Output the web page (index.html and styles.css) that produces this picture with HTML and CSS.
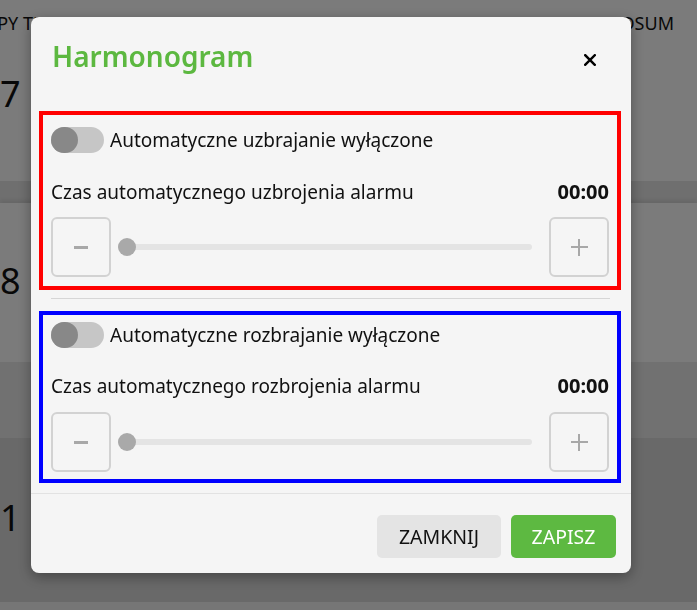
FILE: index.html
```html
<!DOCTYPE html>
<html lang="pl">
<head>
    <meta charset="UTF-8">
    <meta name="viewport" content="width=device-width, initial-scale=1.0">
    <title>Harmonogram</title>
    <link rel="stylesheet" href="styles.css">
</head>
<body>
    <div class="sheet">
        <div class="row row-first">
            <div class="table-head">
                <span class="head-left">TYPY TRANSAKCJI</span>
                <span class="head-right">PODSUM</span>
            </div>
            <div class="row-num">7</div>
        </div>
        <div class="gap"></div>
        <div class="row row-second">
            <div class="row-num">8</div>
        </div>
        <div class="band"></div>
        <div class="row row-third">
            <div class="row-num">1</div>
        </div>
        <div class="row-last"></div>
    </div>

    <div class="overlay"></div>

    <div class="modal">
        <div class="modal-header">
            <h2 class="modal-title">Harmonogram</h2>
            <button class="close-btn" aria-label="Zamknij">
                <svg width="12" height="12" viewBox="0 0 12 12">
                    <path d="M1.2 1.2 L10.8 10.8 M10.8 1.2 L1.2 10.8" stroke="#000" stroke-width="2.4" stroke-linecap="square"/>
                </svg>
            </button>
        </div>

        <div class="modal-body">
            <section class="schedule schedule-arm">
                <label class="switch-row">
                    <span class="switch"><span class="knob"></span></span>
                    <span>Automatyczne uzbrajanie wyłączone</span>
                </label>
                <div class="time-row">
                    <span>Czas automatycznego uzbrojenia alarmu</span>
                    <b>00:00</b>
                </div>
                <div class="stepper">
                    <button class="step-btn"><span class="minus"></span></button>
                    <div class="slider"><span class="thumb"></span></div>
                    <button class="step-btn"><span class="plus"></span></button>
                </div>
            </section>

            <hr class="divider">

            <section class="schedule schedule-disarm">
                <label class="switch-row">
                    <span class="switch"><span class="knob"></span></span>
                    <span>Automatyczne rozbrajanie wyłączone</span>
                </label>
                <div class="time-row">
                    <span>Czas automatycznego rozbrojenia alarmu</span>
                    <b>00:00</b>
                </div>
                <div class="stepper">
                    <button class="step-btn"><span class="minus"></span></button>
                    <div class="slider"><span class="thumb"></span></div>
                    <button class="step-btn"><span class="plus"></span></button>
                </div>
            </section>
        </div>

        <div class="modal-footer">
            <button class="btn btn-close">ZAMKNIJ</button>
            <button class="btn btn-save">ZAPISZ</button>
        </div>
    </div>
</body>
</html>
```

FILE: styles.css
```css
body {
    margin: 0;
    font-family: 'Noto Sans', 'Open Sans', sans-serif;
    color: #111;
    overflow: hidden;
    height: 610px;
}

/* Strona pod oknem */
.sheet {
    display: flex;
    flex-direction: column;
    height: 610px;
}

.row {
    background-color: #f6f6f6;
    overflow: hidden;
}

.row-first { height: 181px; }
.row-second { height: 159px; box-shadow: 0 -3px 4px rgba(0, 0, 0, 0.08); }
.row-third { height: 164px; background-color: #d3d3d3; }

.gap { height: 22px; background-color: #dedede; }
.band { height: 76px; background-color: #e2e2e2; }
.row-last { flex: 1; background-color: #ededed; }

.table-head {
    display: flex;
    justify-content: space-between;
    padding-top: 11px;
    font-size: 18px;
    line-height: 24px;
}

.head-left { margin-left: -23px; }
.head-right { margin-right: 23px; }

.row-num {
    font-size: 36px;
    line-height: 40px;
    margin-top: 39px;
}

.row-second .row-num { margin-top: 58px; }
.row-third .row-num { margin-top: 60px; }

.overlay {
    position: fixed;
    inset: 0;
    background-color: rgba(0, 0, 0, 0.5);
}

/* Okno dialogowe */
.modal {
    position: fixed;
    top: 17px;
    left: 31px;
    width: 600px;
    background-color: #f5f5f5;
    border-radius: 8px;
    box-shadow: 0 4px 14px rgba(0, 0, 0, 0.35);
}

.modal-header {
    height: 86px;
    display: flex;
    align-items: center;
    justify-content: space-between;
    padding: 0 35px 0 21px;
    box-sizing: border-box;
}

.modal-title {
    margin: 0 0 8px 0;
    font-size: 28px;
    font-weight: 600;
    color: #5cb840;
}

.close-btn {
    background: none;
    border: none;
    padding: 0;
    width: 12px;
    height: 12px;
    display: flex;
}

.modal-body {
    padding: 8px 10px 10px 8px;
}

.schedule {
    border: 4px solid #ff0000;
    padding: 12px 8px 9px 8px;
}

.schedule-disarm {
    border-color: #0000ff;
    padding: 7px 8px 7px 8px;
}

.switch-row {
    display: flex;
    align-items: center;
    height: 26px;
    font-size: 19px;
}

.switch {
    width: 53px;
    height: 26px;
    border-radius: 13px;
    background-color: #c6c6c6;
    margin-right: 6px;
    display: flex;
}

.knob {
    width: 27px;
    height: 26px;
    border-radius: 13px;
    background-color: #888888;
}

.time-row {
    display: flex;
    justify-content: space-between;
    margin-top: 27px;
    font-size: 19px;
    line-height: 24px;
}

.schedule-disarm .time-row { margin-top: 26px; }

.time-row b {
    font-weight: 700;
    font-size: 20px;
}

.stepper {
    display: flex;
    align-items: center;
    margin-top: 13px;
}

.schedule-disarm .stepper { margin-top: 14px; }

.step-btn {
    width: 60px;
    height: 60px;
    border: 2px solid #d2d2d2;
    border-radius: 6px;
    background: transparent;
    display: flex;
    align-items: center;
    justify-content: center;
    padding: 0;
}

.minus {
    width: 14px;
    height: 3px;
    background-color: #a8a8a8;
}

.plus {
    position: relative;
    width: 17px;
    height: 17px;
}

.plus::before,
.plus::after {
    content: '';
    position: absolute;
    background-color: #a8a8a8;
}

.plus::before { left: 0; top: 7px; width: 17px; height: 2px; }
.plus::after { left: 7px; top: 0; width: 2px; height: 17px; }

.slider {
    flex: 1;
    height: 6px;
    margin: 0 17px 0 7px;
    border-radius: 3px;
    background-color: #e4e4e4;
    display: flex;
    align-items: center;
}

.thumb {
    width: 18px;
    height: 18px;
    border-radius: 50%;
    background-color: #a9a9a9;
}

.divider {
    border: none;
    border-top: 1px solid #d6d6d6;
    margin: 8px 11px 12px 12px;
}

.modal-footer {
    border-top: 1px solid #e2e2e2;
    padding: 21px 15px 15px;
    display: flex;
    justify-content: flex-end;
    gap: 10px;
}

.btn {
    height: 43px;
    border: none;
    border-radius: 5px;
    font-family: inherit;
    font-size: 19.5px;
    padding: 0;
}

.btn-close {
    background-color: #e4e4e4;
    color: #111;
    width: 124px;
}

.btn-save {
    background-color: #5db941;
    color: #fff;
    width: 105px;
}
```
